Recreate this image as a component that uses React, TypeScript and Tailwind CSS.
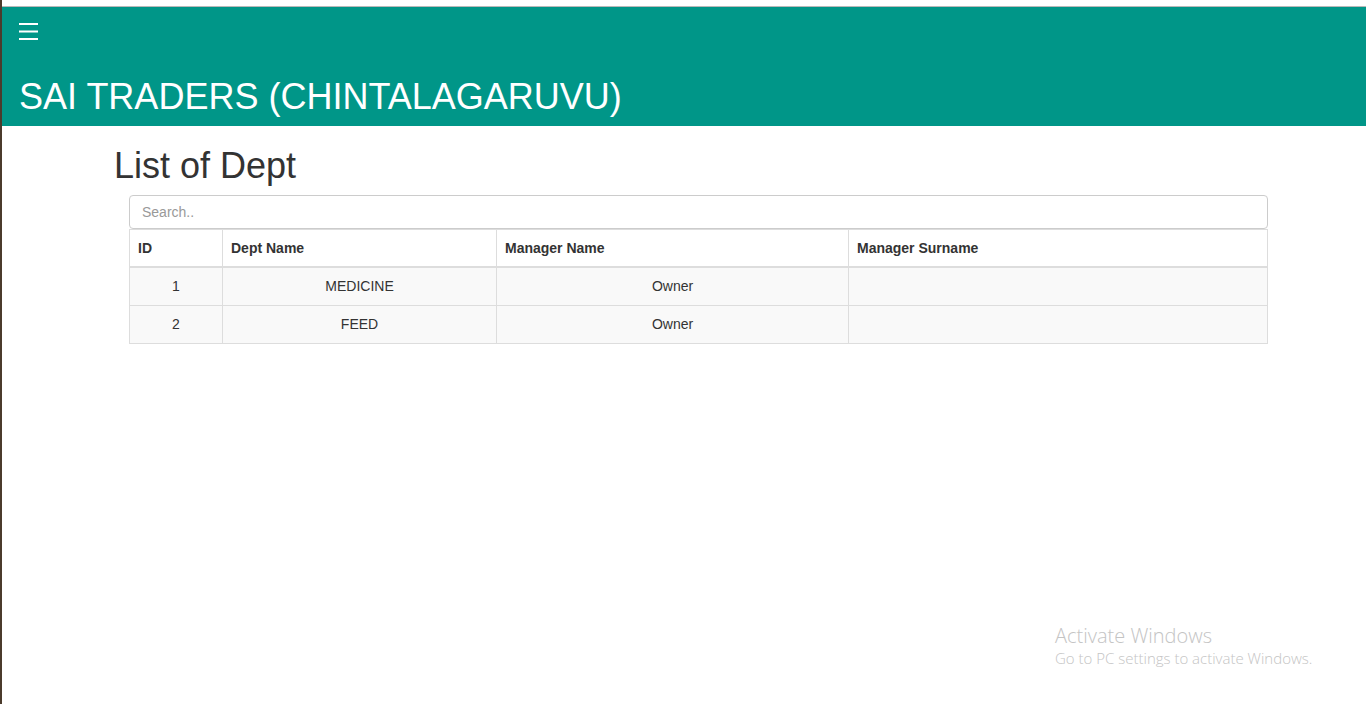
import React from 'react'

type Dept = {
  id: number
  name: string
  managerName: string
  managerSurname: string
}

const depts: Dept[] = [
  { id: 1, name: 'MEDICINE', managerName: 'Owner', managerSurname: '' },
  { id: 2, name: 'FEED', managerName: 'Owner', managerSurname: '' }
]

const Hamburger = () => (
  <svg width="20" height="18" viewBox="0 0 20 18" className="block">
    <rect x="0" y="0" width="19" height="2" fill="#fff" />
    <rect x="0" y="7.5" width="19" height="2" fill="#fff" />
    <rect x="0" y="15" width="19" height="2" fill="#fff" />
  </svg>
)

export default function App() {
  return (
    <div
      className="relative flex h-[704px] w-[1366px] overflow-hidden bg-white text-[#333]"
      style={{ fontFamily: '"Liberation Sans", Arial, sans-serif' }}>
      <div className="w-[2px] shrink-0 bg-[#4b3b2c]" />

      <div className="flex-1">
        <div className="h-[7px] border-b border-[#b9b9b9] bg-white" />

        <header className="h-[119px] bg-[#009688] pl-[17px] pt-[16px] text-white">
          <Hamburger />
          <h1 className="mt-[36px] text-[36px] leading-[39.6px]">
            SAI TRADERS (CHINTALAGARUVU)
          </h1>
        </header>

        <main className="pl-[112px]">
          <h1 className="mt-[20px] mb-[9px] text-[36px] leading-[39.6px] text-[#333]">
            List of Dept
          </h1>

          <div className="ml-[15px] w-[1139px]">
            <input
              className="block h-[34px] w-full rounded-[4px] border border-[#ccc] px-[12px] text-[14px] text-[#555] placeholder:text-[#999] outline-none"
              placeholder="Search.."
              type="text"
            />
            <table className="w-full border-collapse border border-[#ddd] text-[14px] leading-[20px]">
              <colgroup>
                <col className="w-[93px]" />
                <col className="w-[274px]" />
                <col className="w-[352px]" />
                <col />
              </colgroup>
              <thead>
                <tr>
                  <th className="border border-b-2 border-[#ddd] p-[8px] text-left font-bold">ID</th>
                  <th className="border border-b-2 border-[#ddd] p-[8px] text-left font-bold">Dept Name</th>
                  <th className="border border-b-2 border-[#ddd] p-[8px] text-left font-bold">Manager Name</th>
                  <th className="border border-b-2 border-[#ddd] p-[8px] text-left font-bold">Manager Surname</th>
                </tr>
              </thead>
              <tbody>
                {depts.map((dept) => (
                  <tr className="bg-[#f9f9f9]" key={dept.id}>
                    <td className="border border-[#ddd] p-[8px] text-center leading-[21px]">{dept.id}</td>
                    <td className="border border-[#ddd] p-[8px] text-center leading-[21px]">{dept.name}</td>
                    <td className="border border-[#ddd] p-[8px] text-center leading-[21px]">{dept.managerName}</td>
                    <td className="border border-[#ddd] p-[8px] text-center leading-[21px]">{dept.managerSurname}</td>
                  </tr>
                ))}
              </tbody>
            </table>
          </div>
        </main>
      </div>

      {/* windows activation watermark */}
      <div
        className="absolute left-[1055px] top-[623px] text-[#c4c4c4]"
        style={{ fontFamily: '"Open Sans", "Noto Sans", sans-serif' }}>
        <div className="text-[20px] leading-[25px] font-light">Activate Windows</div>
        <div className="text-[15px] leading-[20px] font-light">
          Go to PC settings to activate Windows.
        </div>
      </div>
    </div>
  )
}
